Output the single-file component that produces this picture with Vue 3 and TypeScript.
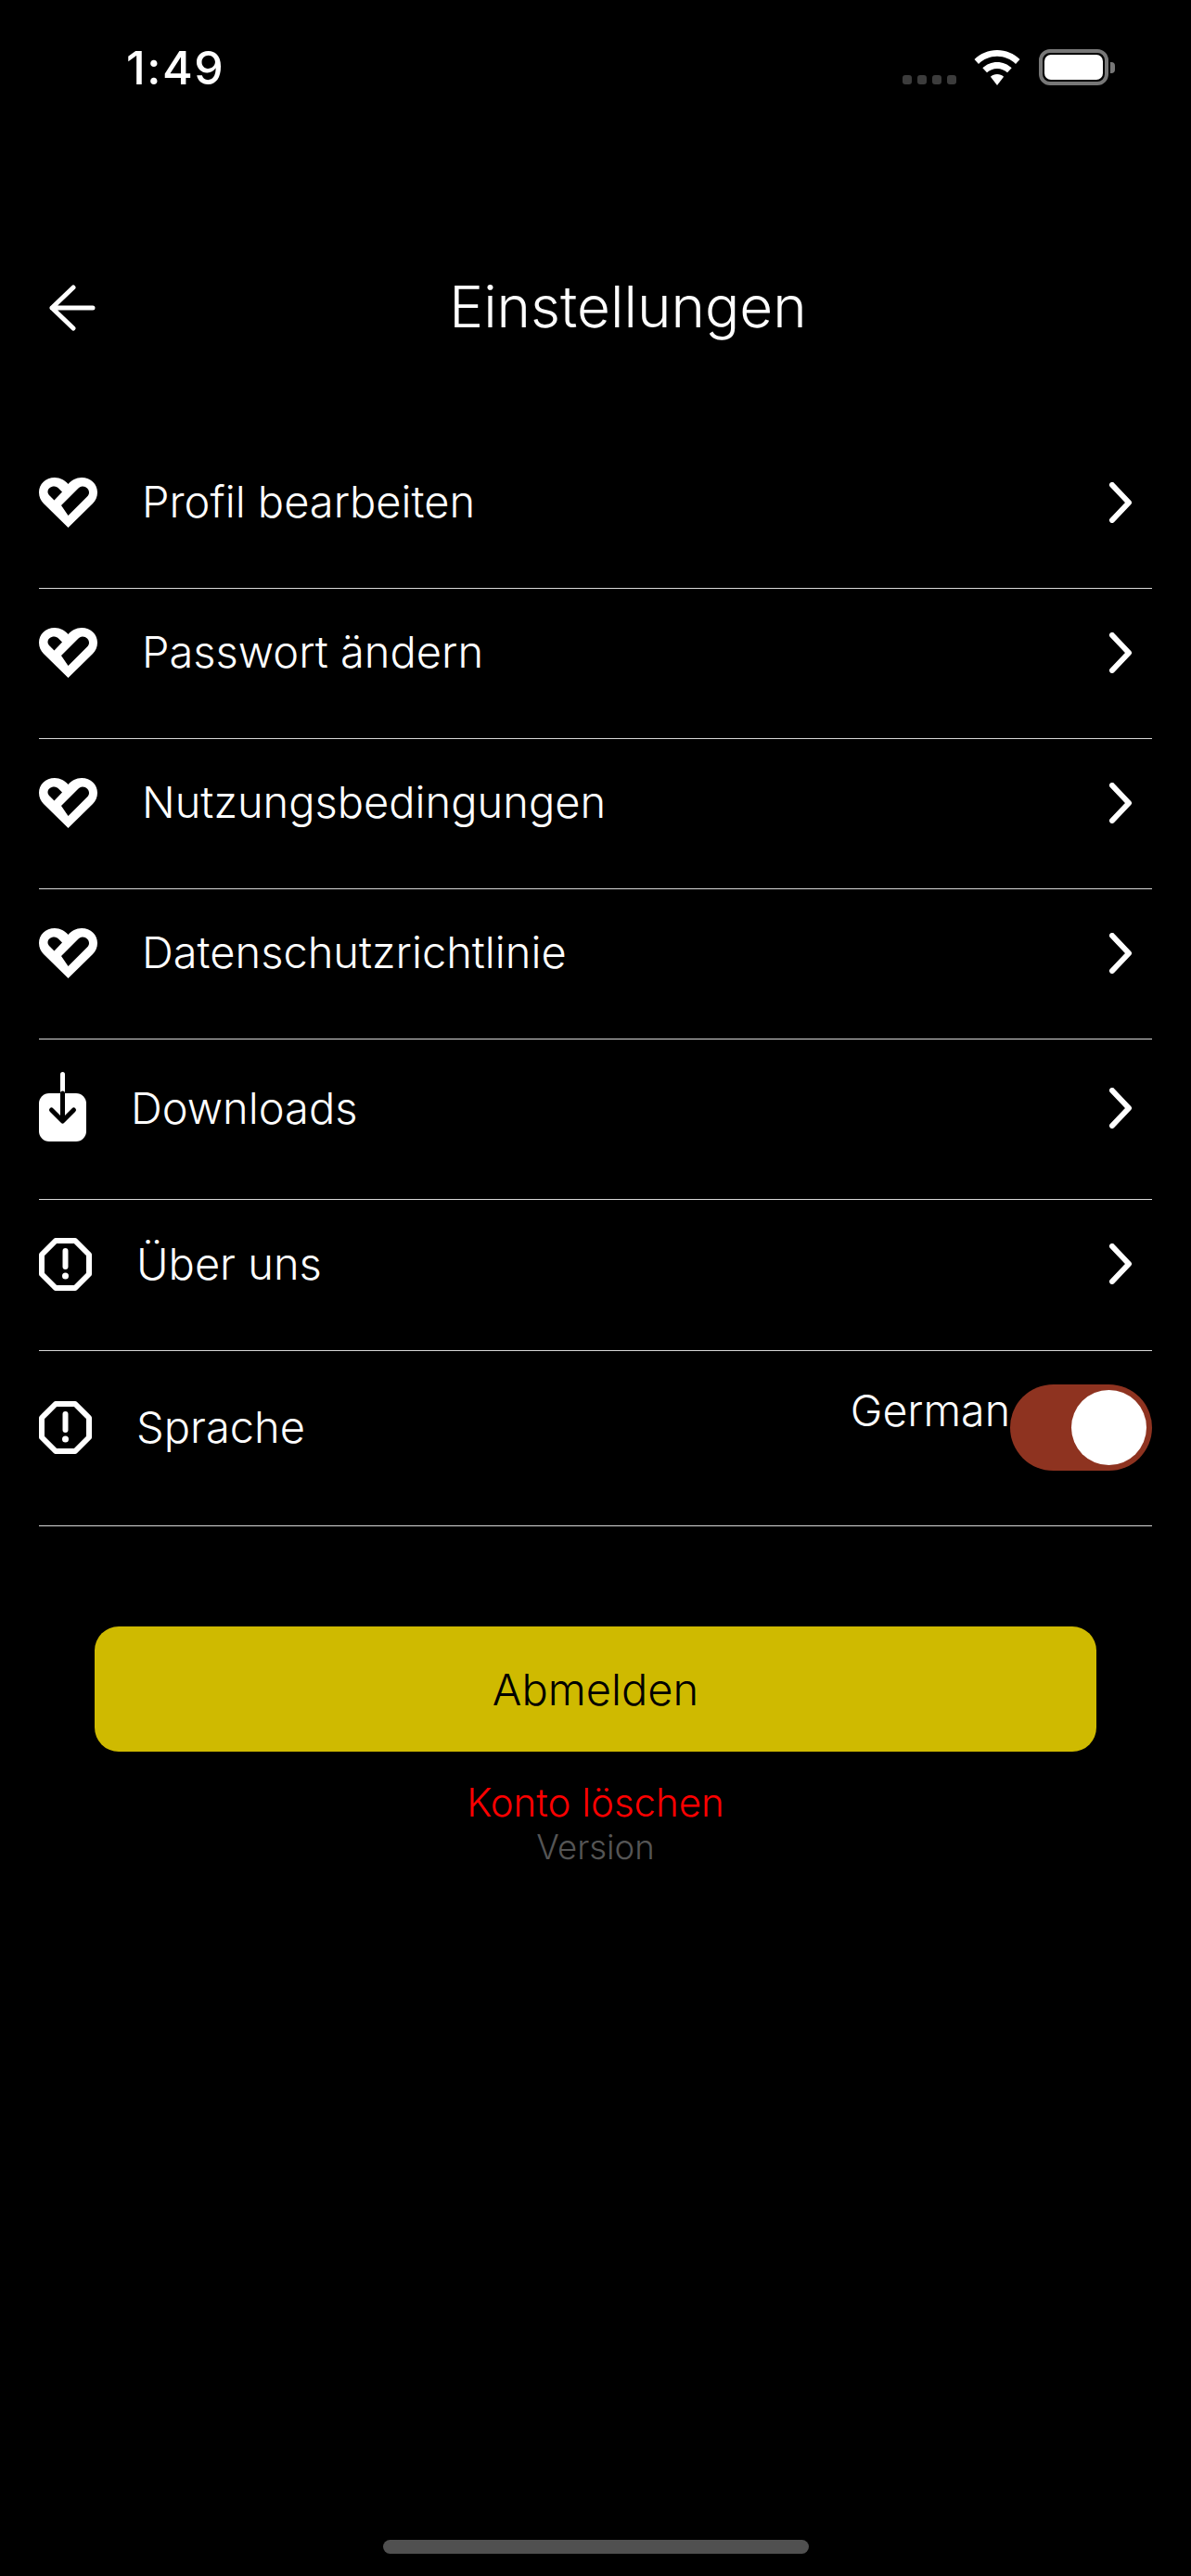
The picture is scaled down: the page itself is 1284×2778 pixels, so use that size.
<script setup lang="ts">
/** 設定メニューの1行 */
interface SettingsRow {
  label: string;
  icon: 'heart' | 'download' | 'alert';
  kind: string;
}

const rows: Array<SettingsRow> = [
  { label: 'Profil bearbeiten', icon: 'heart', kind: 'row-heart' },
  { label: 'Passwort ändern', icon: 'heart', kind: 'row-heart' },
  { label: 'Nutzungsbedingungen', icon: 'heart', kind: 'row-heart' },
  { label: 'Datenschutzrichtlinie', icon: 'heart', kind: 'row-heart' },
  { label: 'Downloads', icon: 'download', kind: 'row-download' },
  { label: 'Über uns', icon: 'alert', kind: 'row-alert' },
];
</script>

<template>
  <div class="screen">
    <div class="status-bar">
      <span class="time">1:49</span>
      <div class="status-icons">
        <div class="signal">
          <i></i><i></i><i></i><i></i>
        </div>
        <svg class="wifi" viewBox="0 0 50 38" width="50" height="38">
          <path d="M25 0C15.500 0 7 3.700 0.500 10L5 15C10.300 9.800 17.300 6.800 25 6.800C32.700 6.800 39.700 9.800 45 15L49.500 10C43 3.700 34.500 0 25 0Z" fill="#fff" />
          <path d="M25 13C19 13 13.500 15.300 9.300 19.300L14 24.300C16.900 21.600 20.800 19.900 25 19.900C29.200 19.900 33.100 21.600 36 24.300L40.700 19.300C36.500 15.300 31 13 25 13Z" fill="#fff" />
          <path d="M25 26C22.300 26 19.800 27 17.900 28.800L25 38L32.100 28.800C30.200 27 27.700 26 25 26Z" fill="#fff" />
        </svg>
        <div class="battery">
          <div class="battery-body"><div class="battery-level"></div></div>
          <div class="battery-cap"></div>
        </div>
      </div>
    </div>

    <header class="header">
      <button class="back" type="button" aria-label="Zurück">
        <svg viewBox="0 0 50 50" width="50" height="50" fill="none" stroke="#fff" stroke-width="5" stroke-linecap="round" stroke-linejoin="round">
          <path d="M47 25H3M26 3L3 25L26 47" />
        </svg>
      </button>
      <h1>Einstellungen</h1>
    </header>

    <div class="menu">
      <div v-for="row in rows" :key="row.label" class="row" :class="row.kind">
        <svg v-if="row.icon === 'heart'" class="icon" viewBox="0 0 63 54" width="63" height="54">
          <path fill="#fff" fill-rule="evenodd" d="M31.500 7C28 3 23 0 17 0C7 0 0 7 0 16C0 21 2 25 5 28L31.500 54L58 28C61 25 63 21 63 16C63 7 56 0 46 0C40 0 35 3 31.500 7ZM16.500 9.500C18.500 9.500 20 10.500 21 11.500L25 15.500L16.500 24.500L12 20C10.500 18.500 9.500 17 9.500 15.500C9.500 12 12.500 9.500 16.500 9.500ZM24 30L42 12C43.500 10.500 45 9.500 47 9.500C51 9.500 54 12.500 54 16C54 17.500 53.500 19 52 20.500L31.500 41Z" />
        </svg>
        <svg v-else-if="row.icon === 'download'" class="icon" viewBox="0 0 51 75" width="51" height="75">
          <rect y="23" width="51" height="52" rx="11" fill="#fff" />
          <path d="M25.500 2.500V23" stroke="#fff" stroke-width="5" stroke-linecap="round" fill="none" />
          <path d="M25.500 23V52M13.500 41L25.500 53L37.500 41" stroke="#000" stroke-width="5" stroke-linecap="round" stroke-linejoin="round" fill="none" />
        </svg>
        <svg v-else class="icon" viewBox="0 0 57 57" width="57" height="57">
          <path d="M18 3H39L54 18V39L39 54H18L3 39V18Z" fill="none" stroke="#fff" stroke-width="6" stroke-linejoin="round" />
          <path d="M28.500 14V31" stroke="#fff" stroke-width="6" stroke-linecap="round" />
          <circle cx="28.500" cy="41" r="3.500" fill="#fff" />
        </svg>
        <span class="label">{{ row.label }}</span>
        <svg class="chevron" viewBox="0 0 30 44" width="30" height="44" fill="none" stroke="#fff" stroke-width="6" stroke-linecap="round" stroke-linejoin="round">
          <path d="M5 3L23 22L5 41" />
        </svg>
      </div>

      <div class="row row-language">
        <svg class="icon" viewBox="0 0 57 57" width="57" height="57">
          <path d="M18 3H39L54 18V39L39 54H18L3 39V18Z" fill="none" stroke="#fff" stroke-width="6" stroke-linejoin="round" />
          <path d="M28.500 14V31" stroke="#fff" stroke-width="6" stroke-linecap="round" />
          <circle cx="28.500" cy="41" r="3.500" fill="#fff" />
        </svg>
        <span class="label">Sprache</span>
        <div class="language">
          <span class="language-name">German</span>
          <div class="toggle"><div class="knob"></div></div>
        </div>
      </div>
    </div>

    <div class="actions">
      <button class="logout" type="button">Abmelden</button>
      <span class="delete">Konto löschen</span>
      <span class="version">Version</span>
    </div>

    <div class="home-indicator"></div>
  </div>
</template>

<style>
html, body {
  background: #000;
}
</style>

<style scoped>
.screen {
  position: relative;
  box-sizing: border-box;
  width: 1284px;
  height: 2778px;
  background: #000;
  color: #fff;
  font-family: Inter, "Liberation Sans", sans-serif;
  font-weight: 350;
}

/* ステータスバー */
.status-bar {
  display: flex;
  justify-content: space-between;
  align-items: flex-start;
  height: 308px;
  box-sizing: border-box;
  padding: 43px 82px 0 136px;
}
.time {
  font-size: 50px;
  font-weight: 500;
  letter-spacing: 1.500px;
  line-height: 60px;
}
.status-icons {
  display: flex;
  align-items: flex-start;
  padding-top: 10px;
}
.signal {
  display: flex;
  gap: 6px;
  margin: 28px 19px 0 0;
}
.signal i {
  width: 10px;
  height: 10px;
  border-radius: 3px;
  background: #3c3c3c;
}
.wifi {
  margin: 1px 20px 0 0;
}
.battery {
  display: flex;
  align-items: center;
}
.battery-body {
  box-sizing: border-box;
  width: 75px;
  height: 39px;
  border: 4px solid #777;
  border-radius: 12px;
  padding: 2px;
}
.battery-level {
  height: 100%;
  border-radius: 7px;
  background: #fff;
}
.battery-cap {
  width: 5px;
  height: 12px;
  margin-left: 2px;
  border-radius: 0 4px 4px 0;
  background: #777;
}

/* ヘッダ */
.header {
  display: flex;
  align-items: flex-start;
  height: 165px;
  padding: 0 42px;
}
.back {
  width: 70px;
  height: 50px;
  border: 0;
  padding: 0 0 0 11px;
  margin-top: -1px;
  background: none;
  text-align: left;
}
.back svg {
  display: block;
}
h1 {
  flex: 1;
  margin: -13px 0 0;
  font-size: 62px;
  font-weight: 350;
  line-height: 72px;
  text-align: center;
}

/* メニュー */
.menu {
  margin: 0 42px;
}
.row {
  display: flex;
  align-items: center;
  box-sizing: border-box;
  border-bottom: 1px solid #d8d8d8;
}
.icon {
  flex: none;
}
.label {
  flex: 1;
  font-size: 47px;
  line-height: 56px;
}
.chevron {
  flex: none;
  margin-right: 18px;
}
.row-heart {
  height: 162px;
  padding-bottom: 23px;
}
.row-heart .label {
  margin-top: -2px;
}
.row-heart .icon {
  margin-right: 48px;
}
.row-download {
  height: 173px;
  padding-bottom: 24px;
}
.row-download .icon {
  margin: -3px 48px 0 0;
}
.row-alert {
  height: 163px;
  padding-bottom: 24px;
}
.row-alert .icon, .row-language .icon {
  margin-right: 48px;
}
.row-language {
  align-items: flex-start;
  height: 189px;
  padding-top: 36px;
}
.row-language .icon {
  margin-top: 18px;
}
.row-language .label {
  margin-top: 18px;
}
.language {
  display: flex;
  align-items: flex-start;
}
.language-name {
  font-size: 46.500px;
  line-height: 56px;
}
.toggle {
  position: relative;
  width: 153px;
  height: 93px;
  border-radius: 47px;
  background: #8e3320;
}
.knob {
  position: absolute;
  top: 6px;
  right: 6px;
  width: 81px;
  height: 81px;
  border-radius: 50%;
  background: #fff;
}

/* 下部ボタン */
.actions {
  display: flex;
  flex-direction: column;
  align-items: center;
  padding: 108px 60px 0;
}
.logout {
  width: 1080px;
  height: 135px;
  border: 0;
  border-radius: 26px;
  background: #cfba00;
  color: #000;
  font-family: inherit;
  font-weight: 350;
  font-size: 47px;
}
.delete {
  margin-top: 27px;
  color: #f00;
  font-size: 42px;
  line-height: 56px;
}
.version {
  color: #555;
  font-size: 36.500px;
  line-height: 40px;
}

.home-indicator {
  position: absolute;
  left: 413px;
  bottom: 24px;
  width: 459px;
  height: 15px;
  border-radius: 8px;
  background: #505050;
}
</style>
